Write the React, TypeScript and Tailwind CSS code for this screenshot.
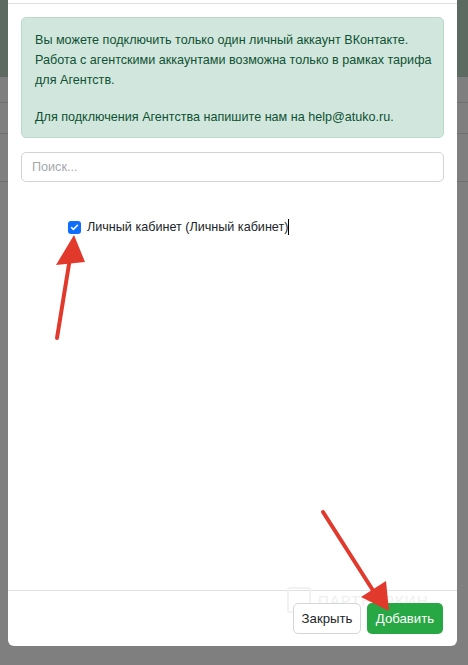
import { Check } from "lucide-react";

const font = { fontFamily: '"Liberation Sans", Arial, sans-serif' };

function Arrows() {
    return (
        <svg className="pointer-events-none absolute inset-0" width="468" height="665" viewBox="0 0 468 665">
            <line x1="57" y1="338" x2="70" y2="258" stroke="#e2392d" strokeWidth="4" strokeLinecap="round" />
            <polygon points="74,235 56,265 85,262" fill="#e2392d" />
            <line x1="323" y1="512" x2="374" y2="592" stroke="#e2392d" strokeWidth="4" strokeLinecap="round" />
            <polygon points="389,611 361,597 386,581" fill="#e2392d" />
        </svg>
    );
}

export default function App() {
    return (
        <div className="relative h-[665px] w-[468px] overflow-hidden bg-[#7f7f7f]" style={font}>
            {/* page under the backdrop */}
            <div className="h-[77px] bg-[#5d6a62]" />
            <div className="h-[26px] border-b border-[#6f6f6f]" />
            <div className="h-[31px] border-b border-[#6f6f6f]" />
            <div className="h-[48px] border-b border-[#6f6f6f]" />

            {/* modal */}
            <div className="absolute left-[8px] top-0 flex h-[646px] w-[449px] flex-col rounded-b-[6px] bg-white">
                <div className="h-[4px] border-b border-[#dee2e6]" />
                <div className="flex-1 px-[13px] pt-[13px]">
                    <div className="rounded-[5px] border border-[#badbcc] bg-[#d1e7dd] px-[13px] pt-[12px] pb-[10px] text-[12.6px] leading-[20px] text-[#0f5132] whitespace-nowrap">
                        <p>
                            Вы можете подключить только один личный аккаунт ВКонтакте.
                            <br />
                            Работа с агентскими аккаунтами возможна только в рамках тарифа
                            <br />
                            для Агентств.
                        </p>
                        <p className="mt-[17px]">Для подключения Агентства напишите нам на help@atuko.ru.</p>
                    </div>

                    <div className="mt-[14px] flex h-[30px] items-center rounded-[5px] border border-[#ced4da] px-[10px] text-[12.6px] text-[#a3a8ad]">
                        Поиск...
                    </div>

                    <div className="mt-[35px] flex h-[20px] items-center pl-[47px] text-[12.6px] text-[#212529]">
                        <span className="flex h-[13px] w-[13px] items-center justify-center rounded-[3px] bg-[#0d6efd]">
                            <Check size={9} strokeWidth={4} color="white" />
                        </span>
                        <span className="ml-[6px]">Личный кабинет (Личный кабинет)</span>
                        <span className="h-[16px] w-px bg-black" />
                    </div>
                </div>

                <div className="relative flex h-[56px] items-center justify-end gap-[6px] border-t border-[#dee2e6] px-[14px] text-[13.2px]">
                    <div className="pointer-events-none absolute left-[279px] top-[-4px] flex items-center gap-[7px] text-[#efefef]">
                        <span className="h-[26px] w-[24px] rounded-[3px] border-2 border-[#f1f1f1]" />
                        <span className="text-[15px] leading-[15px] tracking-[1px]">ПАРТНЕРКИН</span>
                    </div>
                    <button className="relative h-[31px] w-[68px] rounded-[5px] border border-[#d4d7da] bg-white text-[#212529]">
                        Закрыть
                    </button>
                    <button className="relative h-[31px] w-[76px] rounded-[5px] bg-[#28a745] text-white">Добавить</button>
                </div>
            </div>

            <Arrows />
        </div>
    );
}
